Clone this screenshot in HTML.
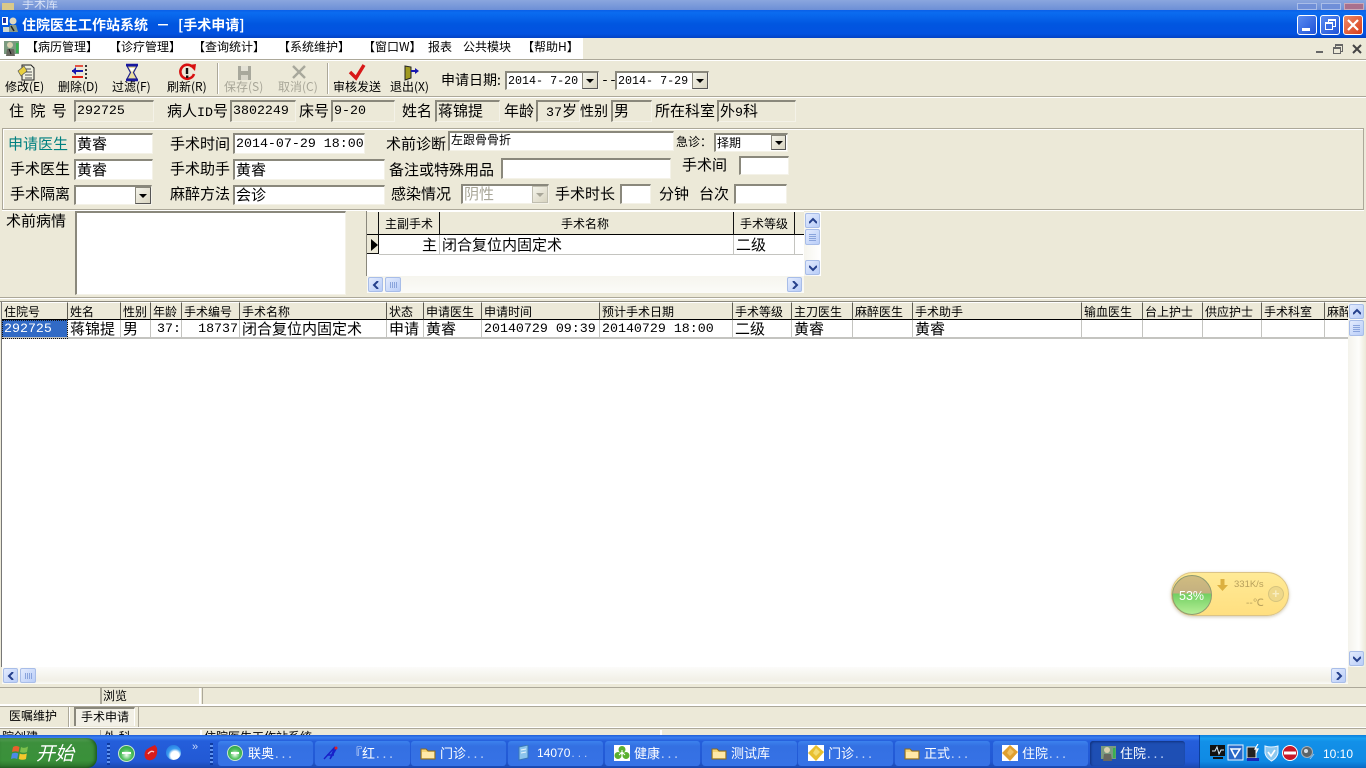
<!DOCTYPE html>
<html lang="zh"><head><meta charset="utf-8"><title>住院医生工作站系统</title>
<style>
html,body{margin:0;padding:0;width:1366px;height:768px;overflow:hidden;background:#ece9d8}
body{position:relative;font-family:"WenQuanYi Zen Hei","Noto Sans CJK SC",sans-serif;font-size:15px;color:#000}
div,span.a{position:absolute;box-sizing:border-box}
.t{white-space:nowrap;line-height:18px;height:18px}
.s{font-size:12px;line-height:14px;height:14px}
.m{font-family:"Liberation Mono",monospace;font-size:13.3px}
.i{background:#fff;border:1px solid #f4f2e8;border-top:2px solid #8a887c;border-left:2px solid #8a887c;white-space:nowrap;line-height:18px;padding-left:1px;overflow:hidden}
.g{background:#ece9d8}
.c{border-right:1px solid #c4c4c0;border-bottom:2px solid #c4c4c0;height:19px;top:320px;background:#fff;line-height:18px;white-space:nowrap;overflow:hidden;padding-left:2px}
.h{top:302px;height:18px;background:#ece9d8;border-top:1px solid #fff;border-right:1px solid #5c5a50;border-bottom:1px solid #000;font-size:12px;line-height:17px;white-space:nowrap;overflow:hidden;padding-left:2px}
.sb{background:linear-gradient(135deg,#e3ebfd,#b9cdf8);border:1px solid #a8bde8;border-radius:2px;color:#25408c;text-align:center}
.tb{top:741px;height:25px;width:95px;background:linear-gradient(#3c82ee,#3470e2 20%,#3672e6);border-radius:3px;color:#fff;font-size:13px;line-height:24px;padding-left:30px;white-space:nowrap}
.tb span{letter-spacing:3px;color:#b8ccf4;margin-left:1px}
.cb{background:linear-gradient(135deg,#f4f3ea,#d8d4c0);border:1px solid #8a887c;border-right-color:#555;border-bottom-color:#555;text-align:center}
.ar{width:0;height:0;border-left:4px solid transparent;border-right:4px solid transparent;border-top:4px solid #000}
</style></head><body>

<!-- top window strip -->
<div style="left:0;top:0;width:1366px;height:10px;background:linear-gradient(#8aa6de,#6d8fd6);overflow:hidden"><div class="s t" style="left:22px;top:-3px;color:#d8e2f6">手术库</div><div style="left:2px;top:3px;width:12px;height:7px;background:#d9c98a"></div></div>
<div style="left:1297px;top:3px;width:20px;height:7px;background:#6f8fd8;border:1px solid #a9bde8"></div>
<div style="left:1321px;top:3px;width:20px;height:7px;background:#6f8fd8;border:1px solid #a9bde8"></div>
<div style="left:1344px;top:3px;width:20px;height:7px;background:#a9708c;border:1px solid #c9a9b8"></div>

<!-- title bar -->
<div style="left:0;top:10px;width:1366px;height:28px;background:linear-gradient(#0a5fe8 0,#0b6cf0 10%,#0156e0 50%,#0252e0 85%,#0342c4 100%)"></div>
<svg style="position:absolute;left:2px;top:16px" width="17" height="17" viewBox="0 0 17 17"><rect x="0" y="1" width="6" height="8" fill="#ffffff"/><rect x="1" y="2" width="3" height="5" fill="#2030a0"/><circle cx="11" cy="5" r="3.500" fill="#e0d8c0"/><path d="M6 16 L8 9 L14 9 L16 16 Z" fill="#8a9a88"/><path d="M1 11 H7 V16 H1 Z" fill="#d0d8d0"/><path d="M9 10 L12 15" stroke="#222" stroke-width="1.500"/></svg>
<div class="t" style="left:22px;top:16px;color:#fff;font-size:14px;font-weight:bold">住院医生工作站系统<span style="margin:0 8px 0 8px">－</span>[手术申请]</div>
<div style="left:1297px;top:15px;width:20px;height:20px;border:1px solid #fff;border-radius:3px;background:linear-gradient(135deg,#5b8cf0,#1e52d8)"><div style="left:4px;top:12px;width:8px;height:3px;background:#fff"></div></div>
<div style="left:1320px;top:15px;width:20px;height:20px;border:1px solid #fff;border-radius:3px;background:linear-gradient(135deg,#5b8cf0,#1e52d8)"><div style="left:7px;top:3px;width:8px;height:8px;border:1px solid #fff;border-top-width:2px"></div><div style="left:4px;top:6px;width:8px;height:8px;border:1px solid #fff;border-top-width:2px;background:#3a6ce4"></div></div>
<div style="left:1343px;top:15px;width:20px;height:20px;border:1px solid #fff;border-radius:3px;background:linear-gradient(135deg,#ec8a68,#d83c18)"><svg style="position:absolute;left:3px;top:3px" width="12" height="12"><path d="M1 1 L11 11 M11 1 L1 11" stroke="#fff" stroke-width="2.200"/></svg></div>

<!-- menu -->
<div style="left:0;top:38px;width:1366px;height:21px;background:#ece9d8"></div>
<div style="left:0;top:38px;width:583px;height:21px;background:#fff"></div>
<svg style="position:absolute;left:3px;top:40px" width="17" height="17" viewBox="0 0 17 17"><rect x="1" y="1" width="15" height="13" fill="#7a9a80"/><circle cx="7" cy="5" r="3" fill="#d8d0b0"/><path d="M3 16 L4 9 H11 L12 16 Z" fill="#686860"/><rect x="13" y="3" width="2.500" height="10" fill="#38b050"/><path d="M6 9 L8 14" stroke="#111"/></svg>
<div class="s t" style="left:26px;top:40px">【病历管理】</div>
<div class="s t" style="left:109px;top:40px">【诊疗管理】</div>
<div class="s t" style="left:193px;top:40px">【查询统计】</div>
<div class="s t" style="left:278px;top:40px">【系统维护】</div>
<div class="s t" style="left:363px;top:40px">【窗口W】</div>
<div class="s t" style="left:428px;top:40px">报表</div>
<div class="s t" style="left:463px;top:40px">公共模块</div>
<div class="s t" style="left:522px;top:40px">【帮助H】</div>
<div style="left:1316px;top:51px;width:7px;height:2px;background:#666"></div>
<div style="left:1335px;top:44px;width:8px;height:8px;border:1px solid #666;border-top-width:2px"></div>
<div style="left:1333px;top:47px;width:8px;height:7px;border:1px solid #666;border-top-width:2px;background:#ece9d8"></div>
<svg style="position:absolute;left:1352px;top:44px" width="10" height="10"><path d="M1 1 L9 9 M9 1 L1 9" stroke="#444" stroke-width="2"/></svg>
<div style="left:0;top:59px;width:1366px;height:2px;background:#fff;border-top:1px solid #aca899"></div>

<!-- toolbar icons -->
<svg style="position:absolute;left:0;top:60px" width="440" height="26" viewBox="0 60 440 26">
<path d="M22 65 H31 L34 68 V80 H22 V75 Z" fill="#f0f0e0" stroke="#222"/><path d="M25 69 H31 M25 72 H32 M25 75 H32 M25 78 H32" stroke="#555"/><path d="M18 71 L24 66 L27 71 L21 76 Z" fill="#e8d040" stroke="#555" stroke-width=".7"/>
<path d="M72 71 H83" stroke="#1818b0" stroke-width="2"/><path d="M72 71 L76 67 V75 Z" fill="#1818b0"/><path d="M72 77 H83" stroke="#e02010" stroke-width="2"/><path d="M86 65 V80" stroke="#333" stroke-width="2" stroke-dasharray="2 2"/><path d="M75 66 H83" stroke="#e02010" stroke-width="1.500"/>
<path d="M127 66 H137 L133.500 72.500 L137 79 H127 L130.500 72.500 Z" fill="#e8dca0" stroke="#222488" stroke-width="1.200"/><path d="M126 65 H138 M126 80 H138" stroke="#1818a0" stroke-width="2.600"/><path d="M129 68 H135 L132 72 Z" fill="#fff"/>
<path d="M192 66.500 A7 7 0 1 0 194 74" fill="none" stroke="#d81010" stroke-width="2.600"/><path d="M189 65 L196 64 L195 71 Z" fill="#d81010"/><path d="M187 68 V74" stroke="#111" stroke-width="2.400"/><rect x="186" y="75.500" width="2.400" height="2.400" fill="#111"/>
<path d="M238 66 H251 V80 H238 Z" fill="#a8a89c"/><rect x="241" y="66" width="7" height="5" fill="#e4e2d6"/><rect x="241" y="75" width="7" height="5" fill="#d8d6ca"/>
<path d="M293 66 L305 78 M305 66 L293 78" stroke="#a8a89c" stroke-width="2.400"/>
<path d="M350 72 L356 78 L364 65" fill="none" stroke="#d81818" stroke-width="3.400"/>
<path d="M405 66 L411 67 V78 L405 80 Z" fill="#a09a20" stroke="#222"/><path d="M411 71 H417" stroke="#1818b0" stroke-width="2"/><path d="M415 68 L419 71 L415 74 Z" fill="#1818b0"/>
</svg>
<div class="s t" style="left:5px;top:80px">修改(E)</div>
<div class="s t" style="left:58px;top:80px">删除(D)</div>
<div class="s t" style="left:112px;top:80px">过滤(F)</div>
<div class="s t" style="left:167px;top:80px">刷新(R)</div>
<div class="s t" style="left:224px;top:80px;color:#a8a698">保存(S)</div>
<div class="s t" style="left:278px;top:80px;color:#a8a698">取消(C)</div>
<div class="s t" style="left:333px;top:80px">审核发送</div>
<div class="s t" style="left:390px;top:80px">退出(X)</div>
<div style="left:217px;top:63px;width:2px;height:31px;background:#fff;border-left:1px solid #aca899"></div>
<div style="left:327px;top:63px;width:2px;height:31px;background:#fff;border-left:1px solid #aca899"></div>
<div class="s t" style="left:441px;top:73px;font-size:14px">申请日期:</div>
<div class="i m" style="left:505px;top:71px;width:94px;height:19px;line-height:17px;font-size:11.700px">2014- 7-20</div>
<div class="cb" style="left:582px;top:72px;width:16px;height:17px"><div class="ar" style="left:3px;top:6px"></div></div>
<div class="t m" style="left:601px;top:72px">--</div>
<div class="i m" style="left:615px;top:71px;width:94px;height:19px;line-height:17px;font-size:11.700px">2014- 7-29</div>
<div class="cb" style="left:692px;top:72px;width:16px;height:17px"><div class="ar" style="left:3px;top:6px"></div></div>
<div style="left:0;top:96px;width:1366px;height:2px;background:#fff;border-top:1px solid #aca899"></div>

<!-- patient row -->
<div class="t" style="left:9px;top:102px;word-spacing:3px">住 院 号</div>
<div class="i m g" style="left:74px;top:100px;width:80px;height:22px;">292725</div>
<div class="t" style="left:167px;top:102px">病人<span class="m">ID</span>号</div>
<div class="i m g" style="left:230px;top:100px;width:66px;height:22px">3802249</div>
<div class="t" style="left:299px;top:102px">床号</div>
<div class="i m g" style="left:331px;top:100px;width:64px;height:22px">9-20</div>
<div class="t" style="left:402px;top:102px">姓名</div>
<div class="i g" style="left:435px;top:100px;width:65px;height:22px">蒋锦提</div>
<div class="t" style="left:504px;top:102px">年龄</div>
<div class="i g" style="left:536px;top:100px;width:44px;height:22px;padding-left:8px"><span class="m">37</span>岁</div>
<div class="t" style="left:580px;top:102px;font-size:14px">性别</div>
<div class="i g" style="left:611px;top:100px;width:41px;height:22px">男</div>
<div class="t" style="left:655px;top:102px">所在科室</div>
<div class="i g" style="left:717px;top:100px;width:79px;height:22px">外<span class="m">9</span>科</div>

<!-- form panel -->
<div style="left:2px;top:128px;width:1362px;height:82px;border:1px solid #aca899;box-shadow:inset 1px 1px 0 #fff,0 1px 0 #fff"></div>
<div class="t" style="left:8px;top:135px;color:#008080">申请医生</div>
<div class="i" style="left:74px;top:133px;width:79px;height:21px">黄睿</div>
<div class="t" style="left:170px;top:135px">手术时间</div>
<div class="i m" style="left:233px;top:133px;width:132px;height:21px">2014-07-29 18:00</div>
<div class="t" style="left:386px;top:135px">术前诊断</div>
<div class="i" style="left:448px;top:131px;width:226px;height:20px;font-size:12px;line-height:14px">左跟骨骨折</div>
<div class="s t" style="left:676px;top:135px">急诊：</div>
<div class="i" style="left:714px;top:133px;width:74px;height:19px;font-size:12px;line-height:15px">择期</div>
<div class="cb" style="left:771px;top:135px;width:15px;height:15px"><div class="ar" style="left:3px;top:5px"></div></div>

<div class="t" style="left:10px;top:160px">手术医生</div>
<div class="i" style="left:74px;top:159px;width:79px;height:21px">黄睿</div>
<div class="t" style="left:170px;top:160px">手术助手</div>
<div class="i" style="left:233px;top:159px;width:152px;height:21px">黄睿</div>
<div class="t" style="left:389px;top:161px">备注或特殊用品</div>
<div class="i" style="left:501px;top:158px;width:170px;height:21px"></div>
<div class="t" style="left:682px;top:156px">手术间</div>
<div class="i" style="left:739px;top:156px;width:50px;height:19px"></div>

<div class="t" style="left:10px;top:185px">手术隔离</div>
<div class="i" style="left:74px;top:185px;width:78px;height:20px"></div>
<div class="cb" style="left:135px;top:187px;width:16px;height:17px"><div class="ar" style="left:3px;top:6px"></div></div>
<div class="t" style="left:170px;top:185px">麻醉方法</div>
<div class="i" style="left:233px;top:185px;width:152px;height:20px;line-height:16px">会诊</div>
<div class="t" style="left:391px;top:185px">感染情况</div>
<div class="i" style="left:461px;top:184px;width:88px;height:20px;color:#a8a698;line-height:16px">阴性</div>
<div class="cb" style="left:532px;top:186px;width:16px;height:17px;border-color:#c0beb0"><div class="ar" style="left:3px;top:6px;border-top-color:#a8a698"></div></div>
<div class="t" style="left:555px;top:185px">手术时长</div>
<div class="i" style="left:620px;top:184px;width:31px;height:20px"></div>
<div class="t" style="left:659px;top:185px">分钟</div>
<div class="t" style="left:699px;top:185px">台次</div>
<div class="i" style="left:734px;top:184px;width:53px;height:20px"></div>

<!-- lower panel -->
<div class="t" style="left:6px;top:212px">术前病情</div>
<div class="i" style="left:75px;top:211px;width:271px;height:84px"></div>
<div style="left:366px;top:211px;width:438px;height:65px;background:#fff;border-left:1px solid #8a887c"></div>
<div style="left:367px;top:212px;width:437px;height:23px;background:#ece9d8;border-bottom:1px solid #000"></div>
<div style="left:378px;top:212px;width:1px;height:42px;background:#111"></div>
<div style="left:439px;top:212px;width:1px;height:23px;background:#111"></div>
<div style="left:733px;top:212px;width:1px;height:23px;background:#111"></div>
<div style="left:794px;top:212px;width:1px;height:23px;background:#111"></div>
<div class="s t" style="left:385px;top:217px">主副手术</div>
<div class="s t" style="left:561px;top:217px">手术名称</div>
<div class="s t" style="left:740px;top:217px">手术等级</div>
<div style="left:367px;top:235px;width:11px;height:19px;background:#ece9d8;border-bottom:1px solid #111"></div>
<div style="left:371px;top:239px;width:0;height:0;border-left:7px solid #000;border-top:6px solid transparent;border-bottom:6px solid transparent"></div>
<div class="t" style="left:422px;top:236px">主</div>
<div class="t" style="left:442px;top:236px">闭合复位内固定术</div>
<div class="t" style="left:736px;top:236px">二级</div>
<div style="left:379px;top:254px;width:424px;height:1px;background:#c4c4c0"></div>
<div style="left:439px;top:235px;width:1px;height:19px;background:#c4c4c0"></div>
<div style="left:733px;top:235px;width:1px;height:19px;background:#c4c4c0"></div>
<div style="left:794px;top:235px;width:1px;height:19px;background:#c4c4c0"></div>
<div style="left:367px;top:276px;width:437px;height:17px;background:linear-gradient(#f6f5ee,#fbfbf8)"></div>
<div class="sb" style="left:368px;top:277px;width:15px;height:15px"><svg style="position:absolute;left:3px;top:3px" width="8" height="8"><path d="M6 0 L2 4 L6 8" fill="none" stroke="#25408c" stroke-width="2"/></svg></div>
<div class="sb" style="left:385px;top:277px;width:16px;height:15px"><div style="left:4px;top:4px;width:7px;height:6px;background:repeating-linear-gradient(90deg,#8aa4dc 0 1px,transparent 1px 2px)"></div></div>
<div class="sb" style="left:787px;top:277px;width:15px;height:15px"><svg style="position:absolute;left:3px;top:3px" width="8" height="8"><path d="M2 0 L6 4 L2 8" fill="none" stroke="#25408c" stroke-width="2"/></svg></div>
<div style="left:804px;top:212px;width:17px;height:64px;background:linear-gradient(90deg,#f6f5ee,#fff)"></div>
<div class="sb" style="left:805px;top:213px;width:15px;height:15px"><svg style="position:absolute;left:3px;top:3px" width="8" height="8"><path d="M0 6 L4 2 L8 6" fill="none" stroke="#25408c" stroke-width="2"/></svg></div>
<div class="sb" style="left:805px;top:229px;width:15px;height:16px"><div style="left:3px;top:4px;width:7px;height:7px;background:repeating-linear-gradient(#8aa4dc 0 1px,transparent 1px 2px)"></div></div>
<div class="sb" style="left:805px;top:260px;width:15px;height:15px"><svg style="position:absolute;left:3px;top:3px" width="8" height="8"><path d="M0 2 L4 6 L8 2" fill="none" stroke="#25408c" stroke-width="2"/></svg></div>
<div style="left:0;top:297px;width:1366px;height:2px;background:#fff;border-top:1px solid #aca899"></div>

<!-- main grid -->
<div style="left:0;top:301px;width:1366px;height:1px;background:#8a887c"></div>
<div style="left:1px;top:302px;width:1347px;height:365px;background:#fff;border-left:1px solid #777"></div>
<div class="h" style="left:2px;width:66px">住院号</div>
<div class="h" style="left:68px;width:53px">姓名</div>
<div class="h" style="left:121px;width:30px">性别</div>
<div class="h" style="left:151px;width:31px">年龄</div>
<div class="h" style="left:182px;width:58px">手术编号</div>
<div class="h" style="left:240px;width:147px">手术名称</div>
<div class="h" style="left:387px;width:37px">状态</div>
<div class="h" style="left:424px;width:58px">申请医生</div>
<div class="h" style="left:482px;width:118px">申请时间</div>
<div class="h" style="left:600px;width:133px">预计手术日期</div>
<div class="h" style="left:733px;width:59px">手术等级</div>
<div class="h" style="left:792px;width:61px">主刀医生</div>
<div class="h" style="left:853px;width:60px">麻醉医生</div>
<div class="h" style="left:913px;width:169px">手术助手</div>
<div class="h" style="left:1082px;width:61px">输血医生</div>
<div class="h" style="left:1143px;width:60px">台上护士</div>
<div class="h" style="left:1203px;width:59px">供应护士</div>
<div class="h" style="left:1262px;width:63px">手术科室</div>
<div class="h" style="left:1325px;width:23px;border-right:0">麻醉方法</div>

<div class="c m" style="left:2px;width:66px;background:#316ac5;color:#fff;outline:1px dotted #111;outline-offset:-1px">292725</div>
<div class="c" style="left:68px;width:53px">蒋锦提</div>
<div class="c" style="left:121px;width:30px">男</div>
<div class="c m" style="left:151px;width:31px;text-align:right;padding:0 0 0 0">37:</div>
<div class="c m" style="left:182px;width:58px;text-align:right;padding:0 1px 0 0">18737</div>
<div class="c" style="left:240px;width:147px">闭合复位内固定术</div>
<div class="c" style="left:387px;width:37px">申请</div>
<div class="c" style="left:424px;width:58px">黄睿</div>
<div class="c m" style="left:482px;width:118px">20140729 09:39</div>
<div class="c m" style="left:600px;width:133px">20140729 18:00</div>
<div class="c" style="left:733px;width:59px">二级</div>
<div class="c" style="left:792px;width:61px">黄睿</div>
<div class="c" style="left:853px;width:60px"></div>
<div class="c" style="left:913px;width:169px">黄睿</div>
<div class="c" style="left:1082px;width:61px"></div>
<div class="c" style="left:1143px;width:60px"></div>
<div class="c" style="left:1203px;width:59px"></div>
<div class="c" style="left:1262px;width:63px"></div>
<div class="c" style="left:1325px;width:23px;border-right:0"></div>

<!-- grid scrollbars -->
<div style="left:1348px;top:302px;width:18px;height:381px;background:linear-gradient(90deg,#f4f3ec,#fdfdfb 60%,#ece9d8)"></div>
<div class="sb" style="left:1349px;top:304px;width:15px;height:15px"><svg style="position:absolute;left:3px;top:3px" width="8" height="8"><path d="M0 6 L4 2 L8 6" fill="none" stroke="#25408c" stroke-width="2"/></svg></div>
<div class="sb" style="left:1349px;top:320px;width:15px;height:16px"><div style="left:3px;top:4px;width:7px;height:7px;background:repeating-linear-gradient(#8aa4dc 0 1px,transparent 1px 2px)"></div></div>
<div class="sb" style="left:1349px;top:651px;width:15px;height:15px"><svg style="position:absolute;left:3px;top:3px" width="8" height="8"><path d="M0 2 L4 6 L8 2" fill="none" stroke="#25408c" stroke-width="2"/></svg></div>
<div style="left:2px;top:667px;width:1346px;height:17px;background:linear-gradient(#fcfcfa,#f1efe6 80%,#fbfbf8)"></div>
<div class="sb" style="left:3px;top:668px;width:15px;height:15px"><svg style="position:absolute;left:3px;top:3px" width="8" height="8"><path d="M6 0 L2 4 L6 8" fill="none" stroke="#25408c" stroke-width="2"/></svg></div>
<div class="sb" style="left:20px;top:668px;width:16px;height:15px"><div style="left:4px;top:4px;width:7px;height:6px;background:repeating-linear-gradient(90deg,#8aa4dc 0 1px,transparent 1px 2px)"></div></div>
<div class="sb" style="left:1331px;top:668px;width:15px;height:15px"><svg style="position:absolute;left:3px;top:3px" width="8" height="8"><path d="M2 0 L6 4 L2 8" fill="none" stroke="#25408c" stroke-width="2"/></svg></div>
<div style="left:1348px;top:667px;width:18px;height:17px;background:#ece9d8"></div>

<!-- floating widget -->
<div style="left:1171px;top:572px;width:118px;height:44px;border-radius:22px;background:linear-gradient(#ffea96,#ffdf80);border:1px solid #dcc486;box-shadow:0 1px 3px rgba(120,100,40,.35)"></div>
<div style="left:1172px;top:575px;width:40px;height:40px;border-radius:50%;background:linear-gradient(#d0bc80 0,#c4b080 45%,#72cf62 47%,#b5ee96 100%);border:1px solid #8f9a70"></div>
<div class="t" style="left:1179px;top:587px;color:#fff;font-family:'Liberation Sans',sans-serif;font-size:12.500px">53%</div>
<svg style="position:absolute;left:1216px;top:578px" width="13" height="14"><path d="M4.500 1 H8.500 V7 H12 L6.500 13 L1 7 H4.500 Z" fill="#dcb040"/></svg>
<div class="t" style="left:1234px;top:576px;color:#b8a05c;font-family:'Liberation Sans',sans-serif;font-size:9.500px">331K/s</div>
<div class="t" style="left:1246px;top:595px;color:#b8a05c;font-family:'Liberation Sans',sans-serif;font-size:10px">--℃</div>
<div style="left:1268px;top:586px;width:16px;height:16px;border-radius:50%;background:#eed88a;border:1px solid #d6c47e"></div>
<div class="t" style="left:1272px;top:585px;color:#f8edc0;font-family:'Liberation Sans',sans-serif;font-size:13px;font-weight:bold">+</div>

<!-- status bars -->
<div style="left:0;top:687px;width:1366px;height:1px;background:#aca899"></div>
<div style="left:0;top:688px;width:101px;height:17px;border-right:1px solid #aca899;border-bottom:1px solid #fff"></div>
<div style="left:101px;top:688px;width:100px;height:17px;border:1px solid #aca899;border-top:0;border-right:2px solid #fff"></div>
<div class="s t" style="left:103px;top:689px">浏览</div>
<div style="left:202px;top:688px;width:1164px;height:17px;border-left:1px solid #aca899"></div>
<div style="left:0;top:704px;width:1366px;height:2px;background:#fff"></div>
<div style="left:0;top:706px;width:1366px;height:1px;background:#aca899"></div>
<div class="s t" style="left:9px;top:709px">医嘱维护</div>
<div style="left:68px;top:707px;width:2px;height:20px;background:#fff;border-left:1px solid #aca899"></div>
<div style="left:74px;top:707px;width:61px;height:19px;background:#f2f0e6;border-left:2px solid #8a887c;border-top:2px solid #8a887c;border-right:1px solid #fff"></div>
<div class="s t" style="left:81px;top:710px">手术申请</div>
<div style="left:138px;top:707px;width:1px;height:20px;background:#aca899"></div>
<div style="left:0;top:727px;width:1366px;height:2px;background:#fff;border-bottom:1px solid #aca899"></div>
<div style="left:0;top:730px;width:1366px;height:5px;overflow:hidden">
 <div class="s t" style="left:2px;top:0">院创建</div>
 <div class="s t" style="left:104px;top:0">外 科</div>
 <div class="s t" style="left:204px;top:0">住院医生工作站系统</div>
 <div style="left:100px;top:0;width:1px;height:6px;background:#aca899"></div>
 <div style="left:200px;top:0;width:2px;height:6px;background:#fff"></div>
 <div style="left:660px;top:0;width:2px;height:6px;background:#fff"></div>
</div>

<!-- taskbar -->
<div style="left:0;top:735px;width:1366px;height:33px;background:linear-gradient(#1f5fd8 0,#3b7ff0 8%,#245edb 18%,#2259d4 80%,#1a47ad 100%)"></div>
<div style="left:0;top:738px;width:97px;height:30px;border-radius:0 10px 10px 0;background:linear-gradient(#5aa55a,#3c8f3c 15%,#3a913a 75%,#2b6f2b);box-shadow:inset -2px 0 3px rgba(0,40,0,.5)"></div>
<svg style="position:absolute;left:11px;top:743px" width="19" height="19" viewBox="0 0 19 19"><path d="M2 4 Q5 2 8.500 4 L7.500 9 Q4.500 7.500 1 9 Z" fill="#e8602c"/><path d="M10 4 Q13 6 17 3.500 L16 9 Q12.500 10.500 9 9 Z" fill="#7cc04c"/><path d="M1 10.500 Q4.500 9 7.200 10.500 L6.200 16 Q3 14.500 0 16 Z" fill="#4c8ae8"/><path d="M8.700 10.500 Q12 12 15.800 10.500 L15 16 Q11.500 17.500 7.800 16 Z" fill="#f4c82c"/></svg>
<div class="t" style="left:36px;top:742px;color:#fff;font-size:19px;font-style:italic;line-height:22px;height:22px">开始</div>
<div style="left:107px;top:743px;width:3px;height:22px;background:repeating-linear-gradient(#0e3aa0 0 2px,#5f93f0 2px 4px)"></div>
<div style="left:118px;top:745px;width:17px;height:17px;border-radius:50%;background:radial-gradient(circle at 50% 60%,#f4fff4 0,#4fc05c 45%,#178c3a 100%);border:1px solid #c8e8d0"></div>
<div style="left:122px;top:752px;width:9px;height:2px;background:#fff"></div>
<svg style="position:absolute;left:143px;top:744px" width="16" height="18" viewBox="0 0 16 18"><path d="M12 1 L14 4 Q15 10 12 14 Q7 18 3 15 Q0 11 3 6 Q7 3 12 1 Z" fill="#d81c1c"/><path d="M5 10 Q8 6 11 8" fill="none" stroke="#f8c8c8" stroke-width="1.400"/></svg>
<div style="left:166px;top:745px;width:15px;height:15px;border-radius:50%;background:radial-gradient(circle at 60% 70%,#fff 0,#fff 30%,#3a9cf0 50%,#1a68d8 100%)"></div>
<div class="s t" style="left:192px;top:740px;color:#c8d8f8;font-family:'Liberation Sans',sans-serif;font-size:11px">»</div>
<div style="left:210px;top:743px;width:3px;height:22px;background:repeating-linear-gradient(#0e3aa0 0 2px,#5f93f0 2px 4px)"></div>

<div class="tb" style="left:218px">联奥<span>...</span></div>
<div style="left:227px;top:745px;width:16px;height:16px;border-radius:50%;background:radial-gradient(circle at 50% 60%,#f4fff4 0,#4fc05c 45%,#178c3a 100%);border:1px solid #c8e8d0"></div>
<div style="left:231px;top:752px;width:8px;height:2px;background:#fff"></div>
<div class="tb" style="left:315px;padding-left:34px">『红<span>...</span></div>
<svg style="position:absolute;left:323px;top:745px" width="16" height="16"><path d="M1 14 L12 2 L7 14 M7 14 L13 4 M4 10 H11" fill="none" stroke="#1820c8" stroke-width="1.400"/><circle cx="13" cy="3" r="1.500" fill="#e02020"/></svg>
<div class="tb" style="left:411px;padding-left:29px">门诊<span>...</span></div>
<svg style="position:absolute;left:420px;top:746px" width="16" height="14"><path d="M1 3 H6 L8 5 H15 V13 H1 Z" fill="#f6d678" stroke="#8a6a20"/><path d="M2 6 H14 V12 H2 Z" fill="#ffe9a8"/></svg>
<div class="tb" style="left:508px;padding-left:29px;font-family:'Liberation Sans',sans-serif;font-size:12px">14070<span>...</span></div>
<svg style="position:absolute;left:517px;top:745px" width="14" height="16"><path d="M2 2 L11 0 V13 L2 15 Z" fill="#8cc4ec" stroke="#3a78b8"/><path d="M4 5 L9 4 M4 8 L9 7" stroke="#e8f4fc"/></svg>
<div class="tb" style="left:605px;padding-left:29px">健康<span>...</span></div>
<div style="left:614px;top:745px;width:16px;height:16px;background:#fff"></div>
<svg style="position:absolute;left:614px;top:745px" width="16" height="16"><circle cx="8" cy="4.500" r="3.500" fill="#5cb030"/><circle cx="4" cy="10.500" r="3.500" fill="#5cb030"/><circle cx="12" cy="10.500" r="3.500" fill="#5cb030"/><path d="M8 5 V12 M5 10 L8 7 L11 10" stroke="#fff" fill="none"/></svg>
<div class="tb" style="left:702px;padding-left:29px">测试库</div>
<svg style="position:absolute;left:711px;top:746px" width="16" height="14"><path d="M1 3 H6 L8 5 H15 V13 H1 Z" fill="#f6d678" stroke="#8a6a20"/><path d="M2 6 H14 V12 H2 Z" fill="#ffe9a8"/></svg>
<div class="tb" style="left:798px;padding-left:30px">门诊<span>...</span></div>
<div style="left:808px;top:745px;width:16px;height:16px;background:#fff"></div>
<svg style="position:absolute;left:808px;top:745px" width="16" height="16"><path d="M8 0 L16 7 L8 16 L0 8 Z" fill="#e8c030"/><path d="M8 3 L12 7 L8 11 L5 8 Z" fill="#f4dc70"/></svg>
<div class="tb" style="left:895px;padding-left:29px">正式<span>...</span></div>
<svg style="position:absolute;left:904px;top:746px" width="16" height="14"><path d="M1 3 H6 L8 5 H15 V13 H1 Z" fill="#f6d678" stroke="#8a6a20"/><path d="M2 6 H14 V12 H2 Z" fill="#ffe9a8"/></svg>
<div class="tb" style="left:993px;padding-left:29px">住院<span>...</span></div>
<div style="left:1002px;top:745px;width:16px;height:16px;background:#fff"></div>
<svg style="position:absolute;left:1002px;top:745px" width="16" height="16"><path d="M8 0 L16 7 L8 16 L0 8 Z" fill="#e0a030"/><path d="M8 3 L12 7 L8 11 L5 8 Z" fill="#f0c060"/></svg>
<div class="tb" style="left:1090px;background:#1e4fb4;padding-left:30px;box-shadow:inset 1px 1px 2px #10307c">住院<span>...</span></div>
<svg style="position:absolute;left:1100px;top:745px" width="17" height="17" viewBox="0 0 17 17"><rect x="1" y="1" width="15" height="13" fill="#7a9a80"/><circle cx="7" cy="5" r="3" fill="#d8d0b0"/><path d="M3 16 L4 9 H11 L12 16 Z" fill="#686860"/><rect x="13" y="3" width="2.500" height="10" fill="#38b050"/></svg>

<!-- tray -->
<div style="left:1199px;top:735px;width:167px;height:33px;background:linear-gradient(#0c7fdc 0,#18a0f0 10%,#1290e8 20%,#0f8ae4 80%,#0a6ac4 100%);border-left:1px solid #0a3f9c"></div>
<svg style="position:absolute;left:1210px;top:744px" width="150" height="18" viewBox="0 0 150 18">
<rect x="0" y="1" width="15" height="11" fill="#111"/><path d="M2 7 H5 L7 3 L9 10 L11 6 H14" stroke="#d8f0ff" fill="none"/><rect x="3" y="13" width="10" height="2" fill="#111"/>
<rect x="18" y="1" width="15" height="15" fill="#2868c8" stroke="#e8f4ff"/><path d="M21 5 H30 L25 13 Z" fill="none" stroke="#fff" stroke-width="1.600"/>
<rect x="37" y="3" width="9" height="11" fill="#222" stroke="#e8e8e8"/><rect x="37" y="14" width="12" height="3" fill="#1828b8"/><path d="M48 0 L45 5 H48 L46 9" stroke="#fff" fill="none" stroke-width="1.200"/>
<path d="M55 2 Q61 4 68 2 V9 Q67 14 61.500 17 Q56 14 55 9 Z" fill="#8cc8f0" stroke="#e8f4ff"/><path d="M58 8 L61 12 L65 6" fill="none" stroke="#fff" stroke-width="1.600"/>
<circle cx="80" cy="9" r="7.500" fill="#c81828" stroke="#fff"/><rect x="74" y="7.500" width="12" height="3" fill="#fff"/>
<circle cx="97" cy="8" r="5.500" fill="#5c6468" stroke="#a8b0b8"/><circle cx="96" cy="7" r="2" fill="#d8e0e8"/><path d="M100 15 L104 10" stroke="#9cc4e8"/>
</svg>
<div class="t" style="left:1323px;top:745px;color:#fff;font-family:'Liberation Sans',sans-serif;font-size:12px">10:10</div>

</body></html>
